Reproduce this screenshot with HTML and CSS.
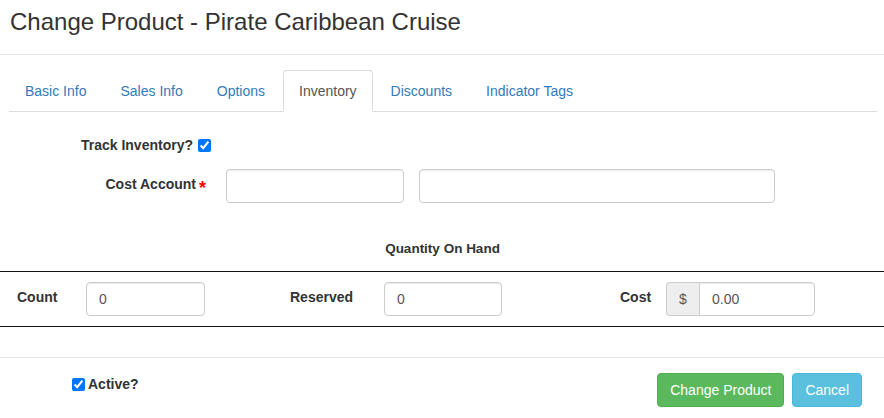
FILE: index.html
```html
<!DOCTYPE html>
<html>
<head>
<meta charset="utf-8">
<link rel="stylesheet" href="styles.css">
</head>
<body>
<div class="modal">
  <div class="modal-header">
    <h1 class="title">Change Product - Pirate Caribbean Cruise</h1>
  </div>
  <ul class="tabs">
    <li class="tab"><a>Basic Info</a></li>
    <li class="tab"><a>Sales Info</a></li>
    <li class="tab"><a>Options</a></li>
    <li class="tab active"><a>Inventory</a></li>
    <li class="tab"><a>Discounts</a></li>
    <li class="tab"><a>Indicator Tags</a></li>
  </ul>
  <div class="form">
    <div class="row row-track">
      <div class="label-cell check-cell">
        <span class="lbl">Track Inventory?</span>
        <input type="checkbox" class="cb" checked>
      </div>
    </div>
    <div class="row row-account">
      <div class="label-cell"><span class="lbl">Cost Account</span><span class="req">*</span></div>
      <input type="text" class="field field-a">
      <input type="text" class="field field-b">
    </div>
  </div>
  <div class="qty-title">Quantity On Hand</div>
  <div class="qty-table">
    <div class="qlabel">Count</div>
    <div><input type="text" class="field field-count" value="0"></div>
    <div class="qlabel">Reserved</div>
    <div><input type="text" class="field field-res" value="0"></div>
    <div class="qlabel">Cost</div>
    <div class="input-group">
      <span class="addon">$</span>
      <input type="text" class="field field-cost" value="0.00">
    </div>
  </div>
  <div class="modal-footer">
    <label class="active-check"><input type="checkbox" class="cb" checked><span class="lbl">Active?</span></label>
    <div class="buttons">
      <button class="btn btn-success">Change Product</button>
      <button class="btn btn-info">Cancel</button>
    </div>
  </div>
</div>
</body>
</html>
```

FILE: styles.css
```css
* { box-sizing: border-box; }
html, body { margin: 0; padding: 0; background: #fff; }
body {
  font-family: "Liberation Sans", Arial, sans-serif;
  font-size: 14px;
  line-height: 20px;
  color: #333;
}
.modal { width: 884px; height: 418px; overflow: hidden; }

.modal-header {
  height: 55px;
  padding: 9px 10px 0 10px;
  border-bottom: 1px solid #e5e5e5;
}
.title {
  margin: 0;
  font-size: 24px;
  line-height: 26px;
  font-weight: normal;
  color: #333;
}

.tabs {
  list-style: none;
  margin: 15px 7px 0 9px;
  padding: 0;
  display: flex;
  border-bottom: 1px solid #ddd;
}
.tab { margin-right: 2px; margin-bottom: -1px; }
.tab a {
  display: block;
  padding: 10px 15px;
  line-height: 20px;
  border: 1px solid transparent;
  border-radius: 4px 4px 0 0;
  color: #337ab7;
}
.tab.active a {
  color: #555;
  background: #fff;
  border-color: #ddd #ddd transparent #ddd;
}

.form { padding-top: 23px; }
.row { display: flex; }
.row-track { height: 20px; }
.row-account { margin-top: 14px; }
.label-cell {
  width: 211px;
  display: flex;
  justify-content: flex-end;
  align-items: flex-start;
  font-weight: bold;
}
.check-cell { align-items: center; }
.row-account .label-cell { padding-right: 5px; padding-top: 5px; }
.req {
  color: #ff0000;
  font-size: 18px;
  margin-left: 3px;
  position: relative;
  top: 4px;
}
.cb {
  margin: 0 0 0 5px;
  width: 13px;
  height: 13px;
}

.field {
  height: 34px;
  padding: 6px 12px;
  border: 1px solid #ccc;
  border-radius: 4px;
  font-family: "Liberation Sans", Arial, sans-serif;
  font-size: 14px;
  color: #555;
  background: #fff;
  box-shadow: inset 0 1px 1px rgba(0,0,0,0.075);
  display: block;
}
.field-a { width: 178px; margin-left: 15px; }
.field-b { width: 356px; margin-left: 15px; }

.qty-title {
  margin-top: 36px;
  text-align: center;
  font-weight: bold;
  font-size: 13.5px;
  line-height: 20px;
  padding-left: 1px;
}

.qty-table {
  margin-top: 12px;
  border-top: 1px solid #111;
  border-bottom: 1px solid #111;
  padding: 10px 0 10px 17px;
  display: grid;
  grid-template-columns: 69px 204px 94px 236px 46px auto;
  align-items: start;
}
.qlabel { font-weight: bold; padding-top: 5px; }
.field-count { width: 119px; }
.field-res { width: 118px; }
.input-group { display: flex; }
.addon {
  display: block;
  height: 34px;
  width: 33px;
  padding: 6px 0 6px 12px;
  background: #eee;
  border: 1px solid #ccc;
  border-right: 0;
  border-radius: 4px 0 0 4px;
  color: #555;
}
.field-cost { width: 116px; border-radius: 0 4px 4px 0; }

.modal-footer {
  margin-top: 30px;
  border-top: 1px solid #e5e5e5;
  padding: 15px 22px 0 72px;
  display: flex;
  justify-content: space-between;
  align-items: flex-start;
}
.active-check {
  display: flex;
  align-items: center;
  margin-top: 1px;
  font-weight: bold;
}
.active-check .cb { margin: 0 3px 0 0; }
.buttons { display: flex; gap: 8px; }
.btn {
  height: 34px;
  padding: 6px 12px;
  font-family: "Liberation Sans", Arial, sans-serif;
  font-size: 14px;
  line-height: 20px;
  color: #fff;
  border: 1px solid transparent;
  border-radius: 4px;
}
.btn-success { background: #5cb85c; border-color: #4cae4c; }
.btn-info { background: #5bc0de; border-color: #46b8da; }
```
